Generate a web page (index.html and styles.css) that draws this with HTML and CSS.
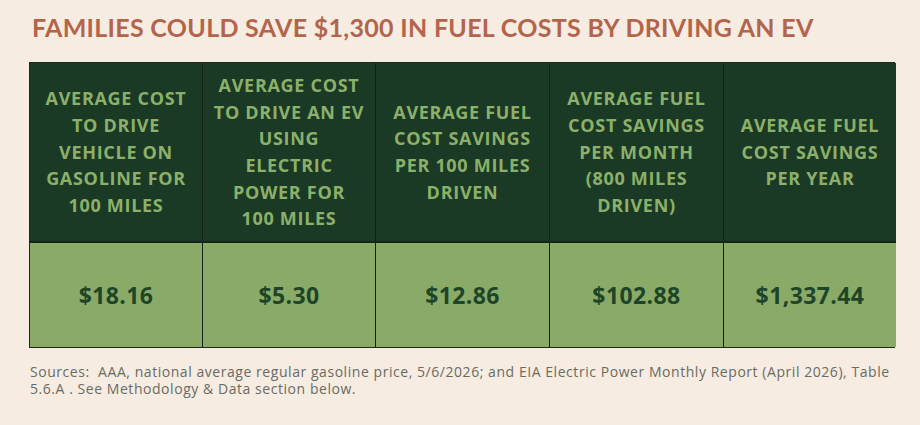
FILE: index.html
```html
<!DOCTYPE html>
<html>
<head>
<meta charset="utf-8">
<link rel="stylesheet" href="styles.css">
</head>
<body>
<div class="page">
  <h1 class="title">FAMILIES COULD SAVE $1,300 IN FUEL COSTS BY DRIVING AN EV</h1>
  <div class="table">
    <div class="cell head">AVERAGE COST<br>TO DRIVE<br>VEHICLE ON<br>GASOLINE FOR<br>100 MILES</div>
    <div class="cell head">AVERAGE COST<br>TO DRIVE AN EV<br>USING<br>ELECTRIC<br>POWER FOR<br>100 MILES</div>
    <div class="cell head">AVERAGE FUEL<br>COST SAVINGS<br>PER 100 MILES<br>DRIVEN</div>
    <div class="cell head">AVERAGE FUEL<br>COST SAVINGS<br>PER MONTH<br>(800 MILES<br>DRIVEN)</div>
    <div class="cell head last">AVERAGE FUEL<br>COST SAVINGS<br>PER YEAR</div>
    <div class="cell val">$18.16</div>
    <div class="cell val">$5.30</div>
    <div class="cell val">$12.86</div>
    <div class="cell val">$102.88</div>
    <div class="cell val last">$1,337.44</div>
  </div>
  <p class="sources">Sources:&nbsp; AAA, national average regular gasoline price, 5/6/2026; and EIA Electric Power Monthly Report (April 2026), Table<br>5.6.A . See Methodology &amp; Data section below.</p>
</div>
</body>
</html>
```

FILE: styles.css
```css
html, body {
  margin: 0;
  padding: 0;
  background: #f6ece2;
}
.page {
  width: 920px;
  height: 425px;
  padding: 12px 0 0 29px;
  box-sizing: border-box;
  font-family: "Open Sans", "Lato", sans-serif;
}
.title {
  margin: 0 0 0 3px;
  font-family: "Lato", sans-serif;
  font-size: 25px;
  line-height: 30px;
  font-weight: 700;
  color: #b2654b;
  letter-spacing: 0.3px;
  height: 50px;
}
.table {
  width: 866px;
  display: grid;
  grid-template-columns: 173px 173px 174px 174px 172px;
  grid-template-rows: 180px 104px;
  border: 1px solid #1c2a1c;
  box-sizing: border-box;
}
.cell {
  display: flex;
  align-items: center;
  justify-content: center;
  text-align: center;
  border-right: 1.5px solid #152015;
}
.cell.last {
  border-right: none;
}
.head {
  background: #1b3a25;
  color: #8cb06a;
  font-size: 18px;
  line-height: 26.7px;
  font-weight: 700;
  letter-spacing: 0.7px;
  border-bottom: 2px solid #13241a;
}
.val {
  background: #8aab68;
  color: #1f4529;
  font-size: 23px;
  font-weight: 700;
  letter-spacing: 0.4px;
}
.sources {
  margin: 15px 0 0 1px;
  font-size: 14px;
  line-height: 17px;
  letter-spacing: 0.55px;
  color: #6a6b63;
}
```
